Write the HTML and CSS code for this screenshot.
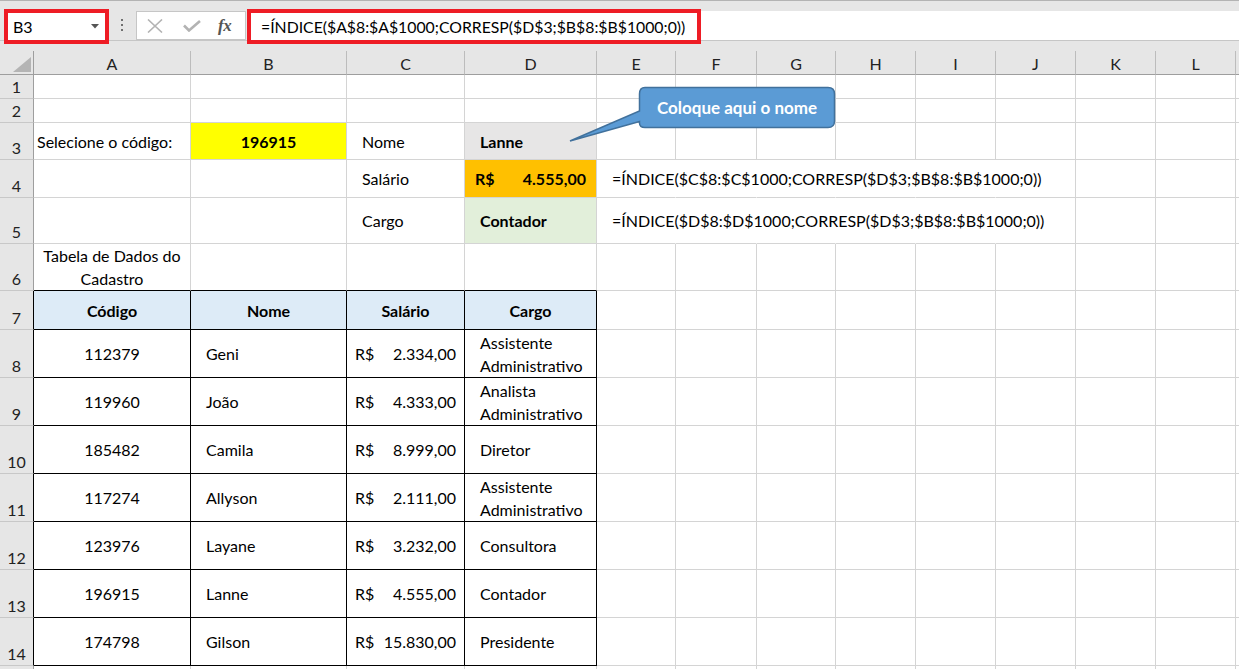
FILE: index.html
```html
<!DOCTYPE html>
<html lang="pt-BR">
<head>
<meta charset="utf-8">
<title>Planilha - ÍNDICE e CORRESP</title>
<link rel="stylesheet" href="styles.css">
</head>
<body>
<div class="topbar">
  <div class="namebox"><span>B3</span><svg class="dd" width="8" height="5" viewBox="0 0 8 5"><path d="M0 0H8L4 4.5Z" fill="#555"/></svg></div>
  <div class="dots"><i></i><i></i><i></i></div>
  <div class="fxbox">
    <svg class="ic-x" width="16" height="14" viewBox="0 0 16 14"><path d="M1 0.5L15 13.5M15 0.5L1 13.5" stroke="#b3b3b3" stroke-width="1.6" fill="none"/></svg>
    <svg class="ic-ok" width="18" height="12" viewBox="0 0 18 12"><path d="M1 5.5L6 10.5L17 1" stroke="#b3b3b3" stroke-width="2.6" fill="none"/></svg>
    <span class="fx">fx</span>
  </div>
  <div class="formula"><div class="fbox">=ÍNDICE($A$8:$A$1000;CORRESP($D$3;$B$8:$B$1000;0))</div></div>
</div>
<div class="gap"></div>
<div class="sheet">
  <div class="r hh">
    <div class="corner"><svg width="18" height="15" viewBox="0 0 18 15"><path d="M18 0V15H0Z" fill="#b4b4b4"/></svg></div>
    <div class="ch">A</div><div class="ch">B</div><div class="ch">C</div><div class="ch">D</div><div class="ch">E</div><div class="ch">F</div><div class="ch">G</div><div class="ch">H</div><div class="ch">I</div><div class="ch">J</div><div class="ch">K</div><div class="ch">L</div><div class="ch"></div>
  </div>
  <div class="r h24">
    <div class="rh">1</div><div class="c"></div><div class="c"></div><div class="c"></div><div class="c"></div><div class="c"></div><div class="c"></div><div class="c"></div><div class="c"></div><div class="c"></div><div class="c"></div><div class="c"></div><div class="c"></div><div class="c"></div>
  </div>
  <div class="r h24">
    <div class="rh">2</div><div class="c"></div><div class="c"></div><div class="c"></div><div class="c"></div><div class="c"></div><div class="c"></div><div class="c"></div><div class="c"></div><div class="c"></div><div class="c"></div><div class="c"></div><div class="c"></div><div class="c"></div>
  </div>
  <div class="r h37">
    <div class="rh">3</div><div class="c lbl">Selecione o código:</div><div class="c yellow b ctr">196915</div><div class="c ind">Nome</div><div class="c grayf b ind">Lanne</div><div class="c"></div><div class="c"></div><div class="c"></div><div class="c"></div><div class="c"></div><div class="c"></div><div class="c"></div><div class="c"></div><div class="c"></div>
  </div>
  <div class="r h38">
    <div class="rh">4</div><div class="c"></div><div class="c"></div><div class="c ind">Salário</div><div class="c orange b accd"><span>R$</span><span>4.555,00</span></div><div class="c ind ov nr">=ÍNDICE($C$8:$C$1000;CORRESP($D$3;$B$8:$B$1000;0))</div><div class="c nr"></div><div class="c nr"></div><div class="c nr"></div><div class="c nr"></div><div class="c"></div><div class="c"></div><div class="c"></div><div class="c"></div>
  </div>
  <div class="r h46">
    <div class="rh">5</div><div class="c"></div><div class="c"></div><div class="c ind">Cargo</div><div class="c green b ind">Contador</div><div class="c ind ov nr">=ÍNDICE($D$8:$D$1000;CORRESP($D$3;$B$8:$B$1000;0))</div><div class="c nr"></div><div class="c nr"></div><div class="c nr"></div><div class="c nr"></div><div class="c"></div><div class="c"></div><div class="c"></div><div class="c"></div>
  </div>
  <div class="r h47">
    <div class="rh">6</div><div class="c ctr wrap bb">Tabela de Dados do<br>Cadastro</div><div class="c bb"></div><div class="c bb"></div><div class="c bb"></div><div class="c"></div><div class="c"></div><div class="c"></div><div class="c"></div><div class="c"></div><div class="c"></div><div class="c"></div><div class="c"></div><div class="c"></div>
  </div>
  <div class="r h39">
    <div class="rh tl">7</div><div class="c t th">Código</div><div class="c t th">Nome</div><div class="c t th">Salário</div><div class="c t th">Cargo</div><div class="c"></div><div class="c"></div><div class="c"></div><div class="c"></div><div class="c"></div><div class="c"></div><div class="c"></div><div class="c"></div><div class="c"></div>
  </div>
  <div class="r h48">
    <div class="rh tl">8</div><div class="c t ctr">112379</div><div class="c t ind">Geni</div><div class="c t acc"><span>R$</span><span>2.334,00</span></div><div class="c t ind wrap">Assistente<br>Administrativo</div><div class="c"></div><div class="c"></div><div class="c"></div><div class="c"></div><div class="c"></div><div class="c"></div><div class="c"></div><div class="c"></div><div class="c"></div>
  </div>
  <div class="r h48">
    <div class="rh tl">9</div><div class="c t ctr">119960</div><div class="c t ind">João</div><div class="c t acc"><span>R$</span><span>4.333,00</span></div><div class="c t ind wrap">Analista<br>Administrativo</div><div class="c"></div><div class="c"></div><div class="c"></div><div class="c"></div><div class="c"></div><div class="c"></div><div class="c"></div><div class="c"></div><div class="c"></div>
  </div>
  <div class="r h48">
    <div class="rh tl">10</div><div class="c t ctr">185482</div><div class="c t ind">Camila</div><div class="c t acc"><span>R$</span><span>8.999,00</span></div><div class="c t ind">Diretor</div><div class="c"></div><div class="c"></div><div class="c"></div><div class="c"></div><div class="c"></div><div class="c"></div><div class="c"></div><div class="c"></div><div class="c"></div>
  </div>
  <div class="r h48">
    <div class="rh tl">11</div><div class="c t ctr">117274</div><div class="c t ind">Allyson</div><div class="c t acc"><span>R$</span><span>2.111,00</span></div><div class="c t ind wrap">Assistente<br>Administrativo</div><div class="c"></div><div class="c"></div><div class="c"></div><div class="c"></div><div class="c"></div><div class="c"></div><div class="c"></div><div class="c"></div><div class="c"></div>
  </div>
  <div class="r h48">
    <div class="rh tl">12</div><div class="c t ctr">123976</div><div class="c t ind">Layane</div><div class="c t acc"><span>R$</span><span>3.232,00</span></div><div class="c t ind">Consultora</div><div class="c"></div><div class="c"></div><div class="c"></div><div class="c"></div><div class="c"></div><div class="c"></div><div class="c"></div><div class="c"></div><div class="c"></div>
  </div>
  <div class="r h48">
    <div class="rh tl">13</div><div class="c t ctr">196915</div><div class="c t ind">Lanne</div><div class="c t acc"><span>R$</span><span>4.555,00</span></div><div class="c t ind">Contador</div><div class="c"></div><div class="c"></div><div class="c"></div><div class="c"></div><div class="c"></div><div class="c"></div><div class="c"></div><div class="c"></div><div class="c"></div>
  </div>
  <div class="r h48">
    <div class="rh tl">14</div><div class="c t ctr">174798</div><div class="c t ind">Gilson</div><div class="c t acc"><span>R$</span><span>15.830,00</span></div><div class="c t ind">Presidente</div><div class="c"></div><div class="c"></div><div class="c"></div><div class="c"></div><div class="c"></div><div class="c"></div><div class="c"></div><div class="c"></div><div class="c"></div>
  </div>
  <div class="r h48">
    <div class="rh"></div><div class="c"></div><div class="c"></div><div class="c"></div><div class="c"></div><div class="c"></div><div class="c"></div><div class="c"></div><div class="c"></div><div class="c"></div><div class="c"></div><div class="c"></div><div class="c"></div><div class="c"></div>
  </div>

  <div class="callout">
    <svg width="276" height="60" viewBox="0 0 276 60"><path d="M80 2.5H263Q269.5 2.5 269.5 9V36Q269.5 42.5 263 42.5H80Q74.5 42.5 74.5 38V36.5L5 56L74.5 26V9Q74.5 2.5 80 2.5Z" fill="#5b9bd5" stroke="#41719c" stroke-width="1.5"/></svg>
    <span class="callout-text">Coloque aqui o nome</span>
  </div>
</div>
</body>
</html>
```

FILE: styles.css
```css
* { box-sizing: border-box; }
html, body { margin: 0; padding: 0; }
body {
  width: 1239px;
  height: 669px;
  overflow: hidden;
  background: #fff;
  font-family: Lato, "Open Sans", sans-serif;
  font-size: 16px;
  color: #000;
}

/* formula bar */
.topbar {
  position: relative;
  z-index: 2;
  display: flex;
  align-items: flex-start;
  height: 41px;
  background: #e6e6e6;
  border-top: 1px solid #b3b3b3;
  border-bottom: 1px solid #c6c6c6;
}
.namebox {
  flex-shrink: 0;
  margin-left: 4px;
  margin-top: 8px;
  width: 105px;
  height: 35px;
  border: 4px solid #ee1c25;
  background: #fff;
  display: flex;
  align-items: center;
  padding-left: 5px;
  font-size: 16px;
}
.namebox .dd { margin-left: auto; margin-right: 6px; }
.dots {
  margin-left: 12px;
  margin-top: 18px;
  display: flex;
  flex-direction: column;
  gap: 3px;
}
.dots i { display: block; width: 2px; height: 2px; background: #6f6f6f; }
.fxbox {
  flex-shrink: 0;
  margin-left: 13px;
  margin-top: 10px;
  width: 110px;
  height: 29px;
  border: 1px solid #c6c6c6;
  background: #fff;
  display: flex;
  align-items: center;
}
.ic-x { margin-left: 10px; }
.ic-ok { margin-left: 20px; margin-top: 1px; }
.fx {
  margin-left: 17px;
  font-family: "Liberation Serif", serif;
  font-style: italic;
  font-weight: bold;
  font-size: 17px;
  color: #555;
  letter-spacing: -0.5px;
}
.formula {
  flex: 1;
  margin-left: 1px;
  margin-top: 10px;
  height: 29px;
  background: #fff;
}
.fbox {
  width: 454px;
  height: 35px;
  margin-top: -2px;
  border: 4px solid #ee1c25;
  display: flex;
  align-items: center;
  padding-left: 10px;
  white-space: nowrap;
  font-size: 15.8px;
}
.gap { height: 10px; background: #e6e6e6; }

/* sheet grid */
.sheet { position: relative; }
.r {
  display: grid;
  grid-template-columns: 34px 157px 156px 118px 132px 79px 81px 79px 80px 80px 80px 80px 80px 80px;
}
.hh { height: 24px; background: #e6e6e6; }
.h24 { height: 24px; }
.h37 { height: 37px; }
.h38 { height: 38px; }
.h46 { height: 46px; }
.h47 { height: 47px; }
.h39 { height: 39px; }
.h48 { height: 48px; }

.corner {
  border-right: 1px solid #9e9e9e;
  border-bottom: 1px solid #9e9e9e;
  display: flex;
  align-items: flex-end;
  justify-content: flex-end;
  padding: 0 2px 2px 0;
}
.ch {
  border-right: 1px solid #bcbcbc;
  border-bottom: 1px solid #9e9e9e;
  display: flex;
  align-items: center;
  justify-content: center;
  font-size: 16px;
  color: #222;
  padding-top: 1px;
}
.rh {
  background: #e6e6e6;
  border-right: 1px solid #9e9e9e;
  border-bottom: 1px solid #c8c8c8;
  display: flex;
  align-items: flex-end;
  justify-content: center;
  font-size: 16px;
  line-height: 20px;
  padding-bottom: 1px;
  color: #222;
}
.rh.tl { border-right-color: #000; }

.c {
  border-right: 1px solid #d4d4d4;
  border-bottom: 1px solid #d4d4d4;
  display: flex;
  align-items: center;
  white-space: nowrap;
  min-width: 0;
}
.lbl { padding-left: 3px; }
.ind { padding-left: 15px; }
.ctr { justify-content: center; text-align: center; }
.b { font-weight: bold; }
.yellow { background: #ffff00; }
.grayf { background: #e7e6e6; }
.orange { background: #ffc000; }
.green { background: #e2efda; }
.accd { justify-content: space-between; padding: 0 10px; }
.acc { justify-content: space-between; padding: 0 8px; }
.ov { overflow: visible; }
.nr { border-right-color: transparent; }
.wrap { line-height: 23px; white-space: normal; }
.bb { border-bottom-color: #000; }
.t { border-right-color: #000; border-bottom-color: #000; }
.th { background: #ddebf7; font-weight: bold; justify-content: center; }

/* callout shape */
.callout {
  position: absolute;
  left: 565px;
  top: 34px;
  width: 276px;
  height: 60px;
}
.callout svg { display: block; }
.callout-text {
  position: absolute;
  left: 74px;
  top: 2px;
  width: 196px;
  height: 40px;
  display: flex;
  align-items: center;
  justify-content: center;
  color: #fff;
  font-weight: bold;
  font-size: 17px;
}
```
